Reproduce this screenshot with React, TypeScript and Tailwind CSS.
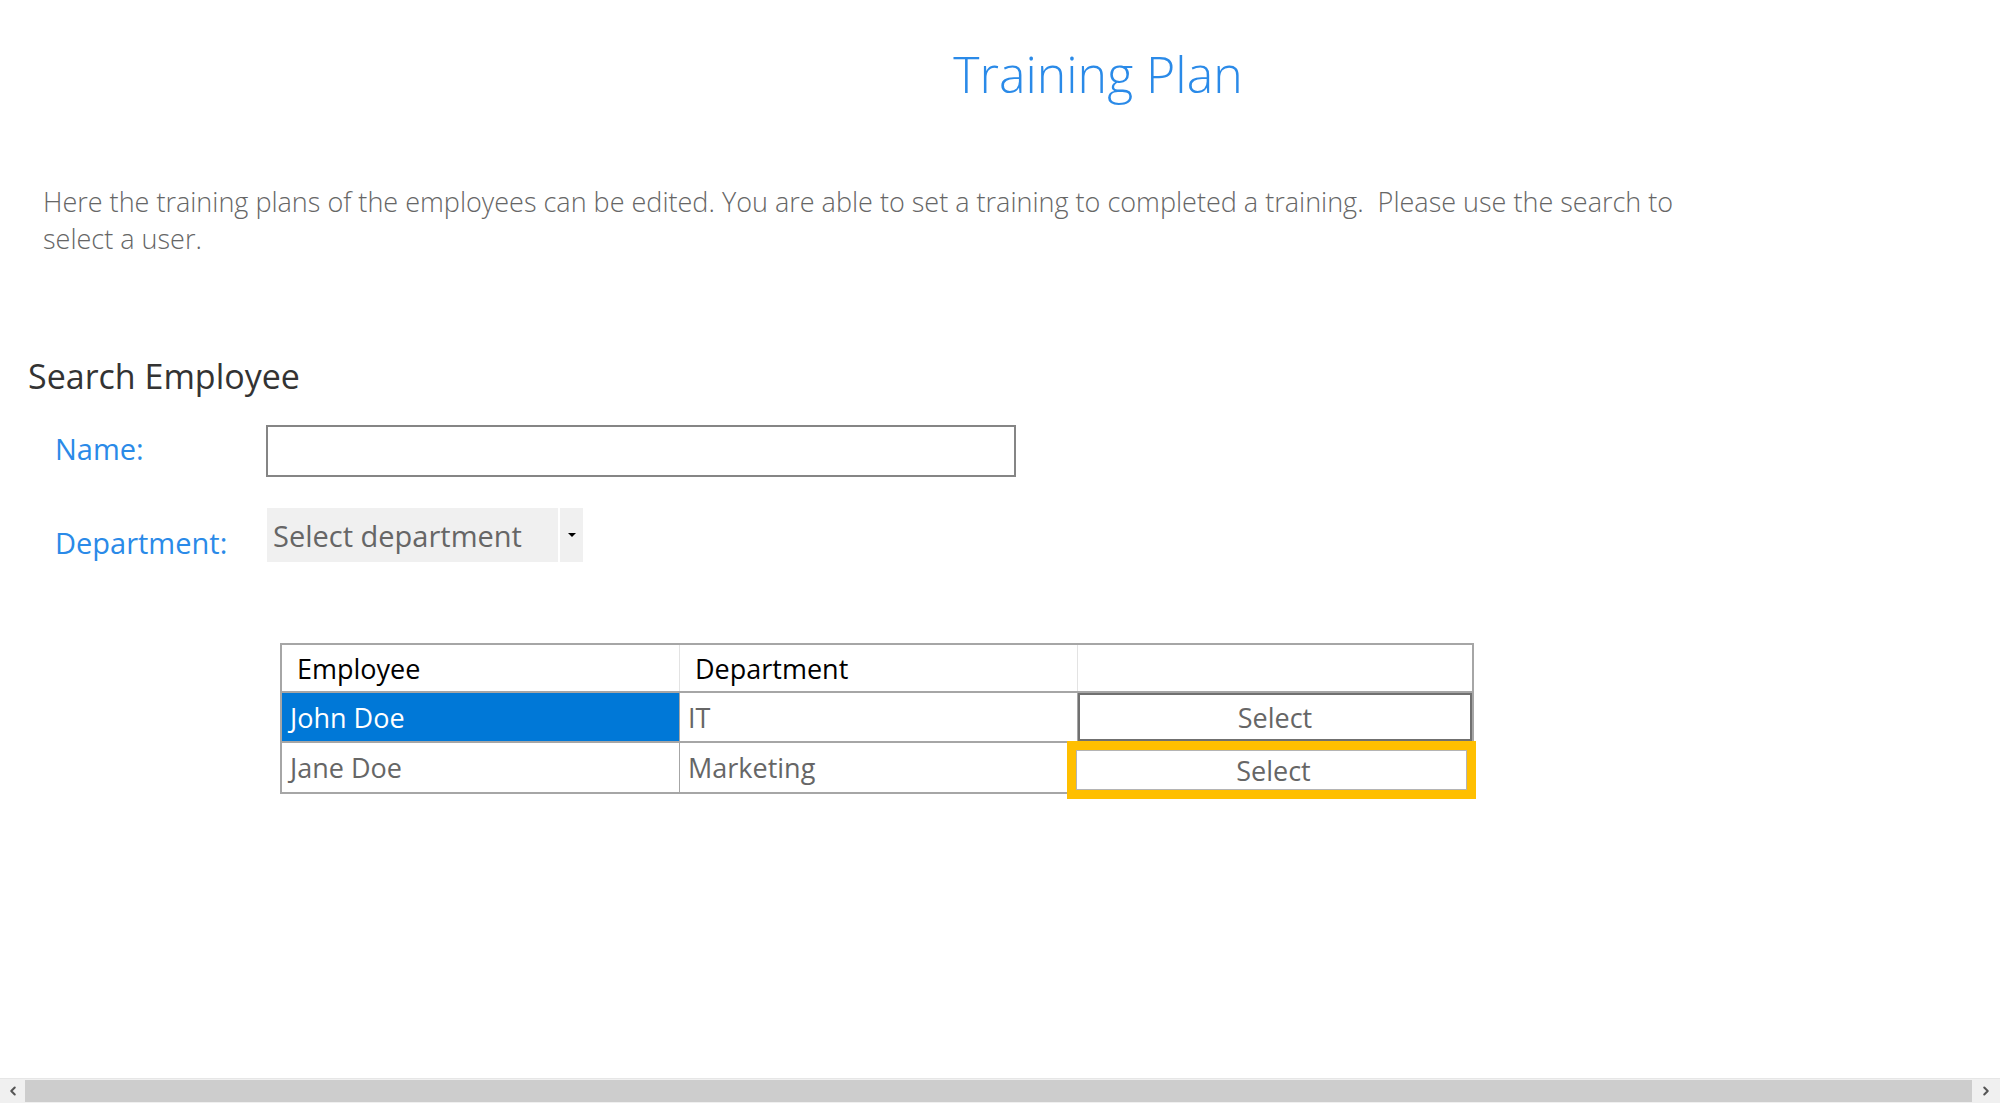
import { ChevronLeft, ChevronRight } from 'lucide-react';

const rows = [
    { name: 'John Doe', dept: 'IT', selected: true, focused: false },
    { name: 'Jane Doe', dept: 'Marketing', selected: false, focused: true },
];

function ScrollBar() {
    return (
        <div className="h-[25px] w-full flex bg-[#f0f0f0] border-t border-[#e6e6e6]">
            <div className="w-[25px] flex items-center justify-center text-[#555]">
                <ChevronLeft size={14} strokeWidth={3.5} />
            </div>
            <div className="flex-1 bg-[#cdcdcd] my-[1px]" />
            <div className="w-[28px] flex items-center justify-center text-[#555]">
                <ChevronRight size={14} strokeWidth={3.5} />
            </div>
        </div>
    );
}

export default function App() {
    return (
        <div className="h-[1103px] w-full overflow-hidden flex flex-col bg-white font-['Open_Sans',sans-serif]">
            <div className="flex-1 w-[2196px]">
                <h1 className="mt-[49px] text-center text-[50px] leading-none font-light text-[#2a8ae8]">
                    Training Plan
                </h1>

                <p className="mt-[84px] pl-[43px] text-[27px] leading-[37px] font-light text-[#666]">
                    Here the training plans of the employees can be edited. You are able to set a training to completed a training.&nbsp; Please use the search to
                    <br />
                    select a user.
                </p>

                <h2 className="mt-[102px] pl-[28px] text-[34px] leading-none text-[#333]">Search Employee</h2>

                <div className="mt-[32px] pl-[55px] flex flex-col gap-[31px]">
                    <div className="flex items-start">
                        <label className="w-[211px] pt-[9px] text-[29px] leading-none text-[#2a8ae8]">Name:</label>
                        <input type="text" className="w-[750px] h-[52px] border-2 border-[#858585] bg-white outline-none" />
                    </div>
                    <div className="flex items-start">
                        <label className="w-[212px] pt-[20px] text-[29px] leading-none text-[#2a8ae8]">Department:</label>
                        <div className="flex gap-[2px] h-[54px]">
                            <div className="w-[291px] bg-[#f0f0f0] pl-[6px] pt-[13px] text-[29px] leading-none text-[#666]">
                                Select department
                            </div>
                            <div className="w-[23px] bg-[#f0f0f0] flex items-center justify-center">
                                <div className="w-0 h-0 border-l-[4px] border-r-[4px] border-t-[4px] border-l-transparent border-r-transparent border-t-black" />
                            </div>
                        </div>
                    </div>
                </div>

                <div className="mt-[81px] ml-[280px] w-[1194px] border-2 border-[#a6a6a6] text-[27px] leading-none">
                    <div className="grid grid-cols-[398px_398px_1fr] h-[46px] text-black">
                        <div className="flex items-center pl-[15px] border-r border-[#e3e3e3]">Employee</div>
                        <div className="flex items-center pl-[15px] border-r border-[#e3e3e3]">Department</div>
                        <div />
                    </div>
                    {rows.map(row => (
                        <div
                            key={row.name}
                            className={`grid grid-cols-[398px_398px_1fr] border-t-2 border-[#a6a6a6] ${row.focused ? 'h-[51px]' : 'h-[50px]'}`}
                        >
                            <div
                                className={`flex items-center pl-[8px] border-r border-[#a6a6a6] ${row.selected ? 'bg-[#0078d7] text-white' : 'text-[#666]'}`}
                            >
                                {row.name}
                            </div>
                            <div className="flex items-center pl-[8px] border-r border-[#a6a6a6] text-[#666]">{row.dept}</div>
                            {row.focused ? (
                                <div className="flex pt-[7px] pb-[2px] pr-[5px]">
                                    <button className="flex-1 -ml-[2px] flex items-center justify-center pl-[4px] border border-[#b4b4b4] bg-white text-[#666] outline-[9px] outline-solid outline-[#ffbf00]">
                                        Select
                                    </button>
                                </div>
                            ) : (
                                <button className="flex items-center justify-center border-2 border-[#707070] bg-white text-[#666]">
                                    Select
                                </button>
                            )}
                        </div>
                    ))}
                </div>
            </div>
            <ScrollBar />
        </div>
    );
}
